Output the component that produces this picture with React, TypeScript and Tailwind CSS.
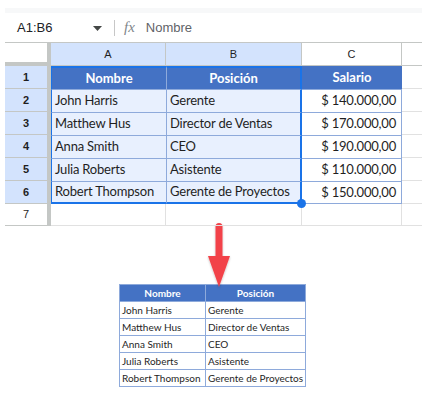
const rows = [
  ['John Harris', 'Gerente', '$ 140.000,00'],
  ['Matthew Hus', 'Director de Ventas', '$ 170.000,00'],
  ['Anna Smith', 'CEO', '$ 190.000,00'],
  ['Julia Roberts', 'Asistente', '$ 110.000,00'],
  ['Robert Thompson', 'Gerente de Proyectos', '$ 150.000,00'],
]

const hdrFont = { fontFamily: 'Arial, "Liberation Sans", sans-serif' }
const cellFont = { fontFamily: 'Lato, "Open Sans", sans-serif' }

function Arrow() {
  return (
    <svg width="30" height="72" viewBox="0 0 30 72" className="block">
      <defs>
        <filter id="sh" x="-30%" y="-10%" width="160%" height="130%">
          <feDropShadow dx="0" dy="1" stdDeviation="1.2" floodColor="#000" floodOpacity="0.25" />
        </filter>
      </defs>
      <g filter="url(#sh)">
        <rect x="11.5" y="2" width="7" height="38" rx="3.5" fill="#f2434a" />
        <polygon points="4,35 26,35 15,66" fill="#f2434a" />
      </g>
    </svg>
  )
}

export default function App() {
  return (
    <div className="w-[439px] h-[403px] bg-white overflow-hidden">
      <div className="ml-[5px] w-[417px]">
        <div className="mt-[8px] h-[5px] bg-[#f7f8f9]" />
        {/* formula bar */}
        <div className="h-[29px] flex items-center text-[13px] text-[#3c4043]" style={hdrFont}>
          <span className="ml-[12px] w-[76px] text-[#202124]">A1:B6</span>
          <svg width="9" height="5" viewBox="0 0 9 5" className="mt-[1px]">
            <polygon points="0,0 9,0 4.5,5" fill="#444746" />
          </svg>
          <div className="ml-[12px] w-px h-[16px] bg-[#c7c7c7]" />
          <span className="ml-[9px] italic text-[#80868b] text-[15px]" style={{ fontFamily: '"Liberation Serif", serif' }}>
            fx
          </span>
          <span className="ml-[11px] text-[#5f6368]">Nombre</span>
        </div>

        {/* column header */}
        <div className="flex h-[24px] border-t border-[#c4c7c5] text-[11px] text-[#1f1f1f]" style={hdrFont}>
          <div className="w-[46px] bg-white border-r-[4px] border-b-[4px] border-[#c4c7c5]" />
          <div className="w-[115px] bg-[#d3e3fd] border-r border-b border-[#c4c7c5] flex items-center justify-center">A</div>
          <div className="w-[136px] bg-[#d3e3fd] border-r border-b border-[#c4c7c5] flex items-center justify-center">B</div>
          <div className="w-[100px] bg-white border-r border-b border-[#c4c7c5] flex items-center justify-center">C</div>
          <div className="w-[20px] border-b border-[#c4c7c5]" />
        </div>

        {/* row 1 */}
        <div className="flex h-[23px]">
          <div className="w-[46px] bg-[#d3e3fd] border-r-[4px] border-b border-[#c4c7c5] flex items-center justify-center text-[11px] font-bold text-[#1f1f1f]" style={hdrFont}>
            1
          </div>
          <div className="w-[115px] bg-[#4472c4] border-t-2 border-l border-[#1a73e8] flex items-center justify-center text-white font-bold text-[13px]" style={cellFont}>
            Nombre
          </div>
          <div className="w-[136px] bg-[#4472c4] border-t-2 border-l border-r-2 border-[#1a73e8] border-l-[#8eaadb] flex items-center justify-center text-white font-bold text-[13px]" style={cellFont}>
            Posición
          </div>
          <div className="w-[100px] bg-[#4472c4] flex items-center justify-center text-white font-bold text-[13px]" style={cellFont}>
            Salario
          </div>
          <div className="w-[20px] border-b border-[#e1e1e1]" />
        </div>

        {rows.map((r, i) => {
          const last = i === rows.length - 1
          return (
            <div key={i} className="flex h-[23px]">
              <div className="w-[46px] bg-[#d3e3fd] border-r-[4px] border-b border-[#c4c7c5] flex items-center justify-center text-[11px] font-bold text-[#1f1f1f]" style={hdrFont}>
                {i + 2}
              </div>
              <div
                className={`w-[115px] bg-[#e8f0fe] border-l border-[#1a73e8] border-t border-t-[#8eaadb] flex items-center pl-[3px] text-[13px] tracking-[-0.2px] whitespace-nowrap text-[#1f1f1f] ${last ? 'border-b-2 border-b-[#1a73e8]' : ''}`}
                style={cellFont}
              >
                {r[0]}
              </div>
              <div
                className={`w-[136px] bg-[#e8f0fe] border-l border-l-[#8eaadb] border-r-2 border-r-[#1a73e8] border-t border-t-[#8eaadb] flex items-center pl-[3px] text-[13px] tracking-[-0.2px] whitespace-nowrap text-[#1f1f1f] ${last ? 'border-b-2 border-b-[#1a73e8]' : ''}`}
                style={cellFont}
              >
                {r[1]}
              </div>
              <div
                className={`w-[100px] bg-white border-r border-t border-[#8eaadb] flex items-center justify-end pr-[5px] text-[13px] tracking-[-0.2px] whitespace-nowrap text-[#1f1f1f] ${last ? 'border-b' : ''}`}
                style={cellFont}
              >
                {r[2]}
              </div>
              <div className="w-[20px] border-b border-[#e1e1e1]" />
            </div>
          )
        })}

        {/* row 7 */}
        <div className="flex h-[22px] relative">
          <div className="w-[46px] bg-white border-r-[4px] border-b border-[#c4c7c5] flex items-center justify-center text-[11px] text-[#1f1f1f]" style={hdrFont}>
            7
          </div>
          <div className="w-[115px] border-r border-b border-[#e1e1e1]" />
          <div className="w-[136px] border-r border-b border-[#e1e1e1]" />
          <div className="w-[100px] border-r border-b border-[#e1e1e1]" />
          <div className="w-[20px] border-b border-[#e1e1e1]" />
          <div className="absolute left-[292px] top-[-5px] w-[9px] h-[9px] rounded-full bg-[#1a73e8]" />
        </div>
      </div>

      <div className="ml-[204px] mt-[-5px]">
        <Arrow />
      </div>

      {/* result table */}
      <div className="ml-[119px] mt-[-9px] w-[187px] border border-[#8eaadb] text-[10px] text-[#1f1f1f]" style={cellFont}>
        <div className="flex h-[16px] bg-[#4472c4] text-white font-bold">
          <div className="w-[86px] border-r border-[#8eaadb] flex items-center justify-center">Nombre</div>
          <div className="flex-1 flex items-center justify-center">Posición</div>
        </div>
        {rows.map((r, i) => (
          <div key={i} className="flex h-[17px] border-t border-[#8eaadb]">
            <div className="w-[86px] border-r border-[#8eaadb] flex items-center pl-[2px]">{r[0]}</div>
            <div className="flex-1 flex items-center pl-[2px]">{r[1]}</div>
          </div>
        ))}
      </div>
    </div>
  )
}
